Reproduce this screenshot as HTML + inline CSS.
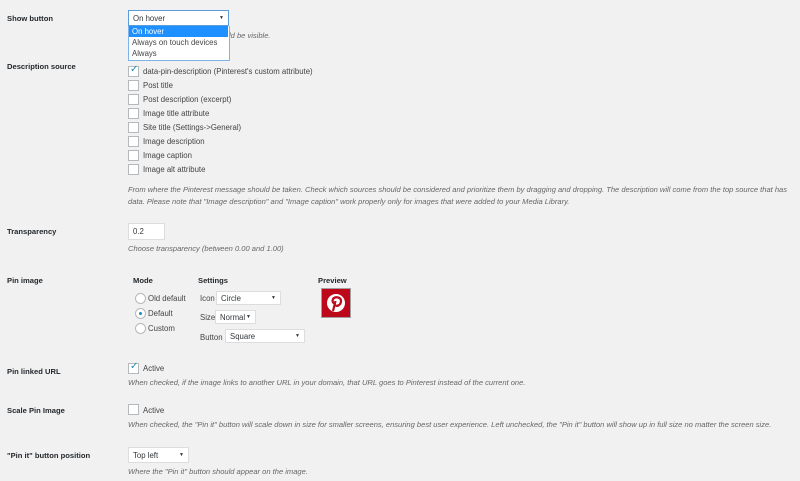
<!DOCTYPE html>
<html><head><style>
body{margin:0;width:800px;height:481px;background:#f1f1f1;font-family:"Liberation Sans",sans-serif;font-size:7.8px;color:#444;position:relative;overflow:hidden}
.a{position:absolute;white-space:nowrap;line-height:11px}
.l{font-weight:bold;color:#23282d;font-size:7.6px}
.i{font-style:italic;color:#666;font-size:7.55px}
.cb{position:absolute;width:9px;height:9px;border:1px solid #b4b9be;background:#fff}
.sel{position:absolute;background:#fff;border:1px solid #ddd;height:14px;line-height:13px;padding-left:4px;box-sizing:border-box;color:#32373c}
.sel:after{content:"▼";position:absolute;right:4px;top:0;font-size:5px}
.noarr:after{content:none}
.r{position:absolute;width:9px;height:9px;border:1px solid #b4b9be;border-radius:50%;background:#fff}
</style></head><body>
<div class="a l" style="left:7px;top:13px">Show button</div>
<div class="sel" style="left:128px;top:10px;width:101px;height:16px;line-height:15px;border-color:#5b9dd9">On hover</div>
<div class="a i" style="left:229px;top:30px">ld be visible.</div>
<div style="position:absolute;left:128px;top:26px;width:100px;height:34px;background:#fff;border:1px solid #7eb4ea;border-top:none"></div>
<div class="a" style="left:129px;top:26px;width:99px;background:#1e90ff;color:#fff;padding-left:3px;box-sizing:border-box">On hover</div>
<div class="a" style="left:132px;top:37px">Always on touch devices</div>
<div class="a" style="left:132px;top:48px">Always</div>

<div class="a l" style="left:7px;top:61px">Description source</div>
<div class="cb" style="left:128px;top:66px"></div><div class="a" style="left:130px;top:64px;color:#1e8cbe;font-size:10px">✓</div>
<div class="a" style="left:143px;top:66px">data-pin-description (Pinterest's custom attribute)</div>
<div class="cb" style="left:128px;top:80px"></div><div class="a" style="left:143px;top:80px">Post title</div>
<div class="cb" style="left:128px;top:94px"></div><div class="a" style="left:143px;top:94px">Post description (excerpt)</div>
<div class="cb" style="left:128px;top:108px"></div><div class="a" style="left:143px;top:108px">Image title attribute</div>
<div class="cb" style="left:128px;top:122px"></div><div class="a" style="left:143px;top:122px">Site title (Settings-&gt;General)</div>
<div class="cb" style="left:128px;top:136px"></div><div class="a" style="left:143px;top:136px">Image description</div>
<div class="cb" style="left:128px;top:150px"></div><div class="a" style="left:143px;top:150px">Image caption</div>
<div class="cb" style="left:128px;top:164px"></div><div class="a" style="left:143px;top:164px">Image alt attribute</div>
<div class="a i" style="left:128px;top:184px">From where the Pinterest message should be taken. Check which sources should be considered and prioritize them by dragging and dropping. The description will come from the top source that has</div>
<div class="a i" style="left:128px;top:196px">data. Please note that "Image description" and "Image caption" work properly only for images that were added to your Media Library.</div>

<div class="a l" style="left:7px;top:226px">Transparency</div>
<div class="sel noarr" style="left:128px;top:223px;width:37px;height:17px;line-height:16px">0.2</div>
<div class="a i" style="left:128px;top:243px">Choose transparency (between 0.00 and 1.00)</div>

<div class="a l" style="left:7px;top:275px">Pin image</div>
<div class="a l" style="left:133px;top:275px">Mode</div>
<div class="a l" style="left:198px;top:275px">Settings</div>
<div class="a l" style="left:318px;top:275px">Preview</div>
<div class="r" style="left:135px;top:293px"></div><div class="a" style="left:148px;top:293px">Old default</div>
<div class="r" style="left:135px;top:308px"></div><div style="position:absolute;left:139px;top:312px;width:3px;height:3px;border-radius:50%;background:#1e8cbe"></div><div class="a" style="left:148px;top:308px">Default</div>
<div class="r" style="left:135px;top:323px"></div><div class="a" style="left:148px;top:323px">Custom</div>
<div class="a" style="left:200px;top:293px">Icon</div>
<div class="sel" style="left:216px;top:291px;width:65px">Circle</div>
<div class="a" style="left:200px;top:312px">Size</div>
<div class="sel" style="left:215px;top:310px;width:41px">Normal</div>
<div class="a" style="left:200px;top:332px">Button</div>
<div class="sel" style="left:225px;top:329px;width:80px">Square</div>
<div style="position:absolute;left:321px;top:288px;width:30px;height:30px;background:#bd081c;border:1px solid #a0a0a0;box-sizing:border-box">
<svg width="28" height="28" viewBox="0 0 28 28"><circle cx="14" cy="14" r="9" fill="#fff"/><path d="M11 22 L13.5 12 M13 16 C15 18 19 16 19 12 C19 8 13 7 11 10 C10 12 11 14 12 14" stroke="#bd081c" stroke-width="2.2" fill="none"/></svg></div>

<div class="a l" style="left:7px;top:366px">Pin linked URL</div>
<div class="cb" style="left:128px;top:363px"></div><div class="a" style="left:130px;top:361px;color:#1e8cbe;font-size:10px">✓</div>
<div class="a" style="left:143px;top:363px">Active</div>
<div class="a i" style="left:128px;top:377px">When checked, if the image links to another URL in your domain, that URL goes to Pinterest instead of the current one.</div>

<div class="a l" style="left:7px;top:405px">Scale Pin Image</div>
<div class="cb" style="left:128px;top:404px"></div>
<div class="a" style="left:143px;top:405px">Active</div>
<div class="a i" style="left:128px;top:419px">When checked, the "Pin it" button will scale down in size for smaller screens, ensuring best user experience. Left unchecked, the "Pin it" button will show up in full size no matter the screen size.</div>

<div class="a l" style="left:7px;top:450px">"Pin it" button position</div>
<div class="sel" style="left:128px;top:447px;width:61px;height:16px;line-height:15px">Top left</div>
<div class="a i" style="left:128px;top:466px">Where the "Pin it" button should appear on the image.</div>
</body></html>
